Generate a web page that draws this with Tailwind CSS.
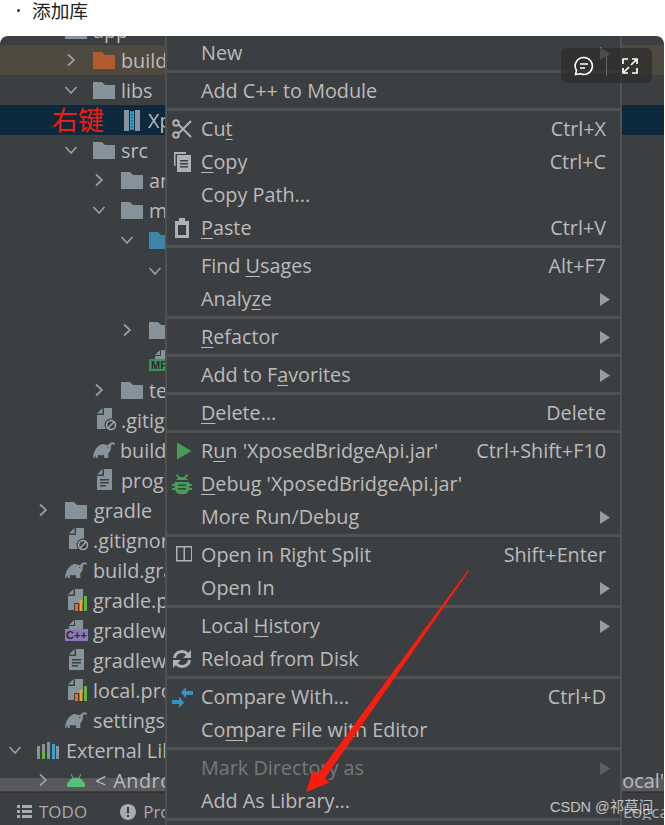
<!doctype html>
<html lang="zh">
<head>
<meta charset="utf-8">
<script src="https://cdn.jsdelivr.net/npm/@tailwindcss/browser@4"></script>
</head>
<body class="bg-white font-['Open_Sans','Noto_Sans_CJK_SC',sans-serif]">
<svg class="hidden">
  <symbol id="chev-r" viewBox="0 0 10 14"><path d="M2 1.500 8 7l-6 5.500" fill="none" stroke="#9a9c9e" stroke-width="1.700"/></symbol>
  <symbol id="chev-d" viewBox="0 0 14 10"><path d="M1.500 2 7 8l5.500-6" fill="none" stroke="#9a9c9e" stroke-width="1.700"/></symbol>
  <symbol id="folder" viewBox="0 0 22 17"><path d="M0 0h9l3 3h10v14H0z"/></symbol>
  <symbol id="file-text" viewBox="0 0 16 22"><path d="M0 5.500 5.500 0v5.500zM7 0h8v21H0V7h7z" fill="#87939a"/><path d="M3 10h9v1.500H3zM3 13h9v1.500H3zM3 16h6v1.500H3z" fill="#3c3f41"/></symbol>
  <symbol id="file-ignore" viewBox="0 0 20 24"><path d="M0 5.500 5.500 0v5.500zM7 0h8v21H0V7h7z" fill="#87939a"/><circle cx="14" cy="17" r="6.500" fill="#3c3f41"/><circle cx="14" cy="17" r="4.500" fill="none" stroke="#a2abb1" stroke-width="1.500"/><path d="m11 20 6-6" stroke="#a2abb1" stroke-width="1.500"/></symbol>
  <symbol id="elephant" viewBox="0 0 66 48"><path d="M0 48C2 28 12 8 30 6L44 10C48 8 50 2 58 1 64 0 66 4 66 8L61 8C58 4 56 8 54 12 54 24 50 30 46 34L46 48 34 48 32 38C26 40 20 40 15 38L14 48 8 48 7 40 3 48z" fill="#87939a"/><circle cx="44" cy="16" r="1.800" fill="#3c3f41"/></symbol>
  <symbol id="file-chart" viewBox="0 0 20 22"><path d="M0 5.500 5.500 0v5.500zM7 0h8v21H0V7h7z" fill="#87939a"/><path d="M6 14h14v8H6z" fill="#3c3f41"/><path d="M7 15h3v7H7z" fill="#f26522"/><path d="M11.500 11h3v11h-3z" fill="#e8a33d"/><path d="M16 7h3v15h-3z" fill="#62b543"/></symbol>
  <symbol id="tri" viewBox="0 0 10 13"><path d="M0 0l10 6.500L0 13z"/></symbol>
</svg>

<div class="flex h-[36px] items-center pb-[16px] text-[18.700px] leading-none text-[#222]">
  <span class="ml-[17px] mr-[12px] h-[3px] w-[3px] rounded-full bg-[#333]"></span>
  <span class="font-['Noto_Sans_CJK_SC',sans-serif]">添加库</span>
</div>

<main class="relative h-[789px] w-[664px] overflow-hidden rounded-t-[8px] bg-[#3c3f41] text-[19.800px] leading-none text-[#bbbbbb]">
  <div class="flex h-full flex-col">
    <div class="relative min-h-0 flex-1 overflow-hidden">
      <div class="mt-[-21px] flex flex-col [&>div>span:last-child]:translate-y-[1px]">
        <div class="flex h-[30px] items-center pl-[29px]"><span class="w-[36px]"></span><svg class="mr-[6px] h-[17px] w-[22px] fill-[#87939a]"><use href="#folder"/></svg><span>app</span></div>
        <div class="flex h-[30px] items-center bg-[#4e4a40] pl-[57px]"><span class="flex w-[36px]"><svg class="ml-[9px] h-[14px] w-[10px]"><use href="#chev-r"/></svg></span><svg class="mr-[6px] h-[17px] w-[22px] fill-[#b15b2e]"><use href="#folder"/></svg><span>build</span></div>
        <div class="flex h-[30px] items-center pl-[57px]"><span class="flex w-[36px]"><svg class="ml-[7px] h-[10px] w-[14px]"><use href="#chev-d"/></svg></span><svg class="mr-[6px] h-[17px] w-[22px] fill-[#87939a]"><use href="#folder"/></svg><span>libs</span></div>
        <div class="relative flex h-[30px] items-center bg-[#0d293e] pl-[85px]"><span class="w-[36px]"></span>
          <svg class="ml-[3px] mr-[8px] h-[21px] w-[16px]" viewBox="0 0 16 21"><path d="M0 0h16v21H0z" fill="#87939a"/><path d="M5 0h6v21H5z" fill="#0d293e"/><path d="M6 1h4v19H6z" fill="#3aa0d0"/><path d="M8 1v19" stroke="#0d293e" stroke-width="1" stroke-dasharray="1.500 1.500"/></svg>
          <span class="translate-y-[1px]">Xp</span>
          <span class="absolute left-[52px] top-[-2px] font-['Noto_Sans_CJK_SC',sans-serif] text-[26px] leading-[30px] text-[#f41c12]">右键</span>
        </div>
        <div class="flex h-[30px] items-center pl-[57px]"><span class="flex w-[36px]"><svg class="ml-[7px] h-[10px] w-[14px]"><use href="#chev-d"/></svg></span><svg class="mr-[6px] h-[17px] w-[22px] fill-[#87939a]"><use href="#folder"/></svg><span>src</span></div>
        <div class="flex h-[30px] items-center pl-[85px]"><span class="flex w-[36px]"><svg class="ml-[9px] h-[14px] w-[10px]"><use href="#chev-r"/></svg></span><svg class="mr-[6px] h-[17px] w-[22px] fill-[#87939a]"><use href="#folder"/></svg><span>an</span></div>
        <div class="flex h-[30px] items-center pl-[85px]"><span class="flex w-[36px]"><svg class="ml-[7px] h-[10px] w-[14px]"><use href="#chev-d"/></svg></span><svg class="mr-[6px] h-[17px] w-[22px] fill-[#87939a]"><use href="#folder"/></svg><span>m</span></div>
        <div class="flex h-[30px] items-center pl-[113px]"><span class="flex w-[36px]"><svg class="ml-[7px] h-[10px] w-[14px]"><use href="#chev-d"/></svg></span><svg class="mr-[6px] h-[17px] w-[22px] fill-[#3f86a6]"><use href="#folder"/></svg></div>
        <div class="flex h-[30px] items-center pl-[141px]"><span class="flex w-[36px]"><svg class="ml-[7px] h-[10px] w-[14px]"><use href="#chev-d"/></svg></span></div>
        <div class="h-[30px]"></div>
        <div class="flex h-[30px] items-center pl-[113px]"><span class="flex w-[36px]"><svg class="ml-[9px] h-[14px] w-[10px]"><use href="#chev-r"/></svg></span><svg class="mr-[6px] h-[17px] w-[22px] fill-[#87939a]"><use href="#folder"/></svg></div>
        <div class="flex h-[30px] items-center pl-[149px]">
          <div class="flex w-[23px] flex-col items-center">
            <svg class="ml-[4px] h-[10px] w-[15px]" viewBox="0 0 15 10"><path d="M0 6 5 1v5zM6 1h8v9H0V7h6z" fill="#87939a"/></svg>
            <span class="h-[12px] w-[23px] bg-[#3b8f5c] pl-[2px] font-['Liberation_Sans',sans-serif] text-[11px] font-bold leading-[12px] text-[#2b2d2e]">MF</span>
          </div>
        </div>
        <div class="flex h-[30px] items-center pl-[85px]"><span class="flex w-[36px]"><svg class="ml-[9px] h-[14px] w-[10px]"><use href="#chev-r"/></svg></span><svg class="mr-[6px] h-[17px] w-[22px] fill-[#87939a]"><use href="#folder"/></svg><span>te</span></div>
        <div class="flex h-[30px] items-center pl-[97px]"><svg class="mr-[4px] h-[24px] w-[20px]"><use href="#file-ignore"/></svg><span>.gitig</span></div>
        <div class="flex h-[30px] items-center pl-[93px]"><svg class="mr-[5px] h-[16px] w-[22px]"><use href="#elephant"/></svg><span>build</span></div>
        <div class="flex h-[30px] items-center pl-[97px]"><svg class="mr-[8px] h-[22px] w-[16px]"><use href="#file-text"/></svg><span>prog</span></div>
        <div class="flex h-[30px] items-center pl-[29px]"><span class="flex w-[36px]"><svg class="ml-[9px] h-[14px] w-[10px]"><use href="#chev-r"/></svg></span><svg class="mr-[7px] h-[17px] w-[22px] fill-[#87939a]"><use href="#folder"/></svg><span>gradle</span></div>
        <div class="flex h-[30px] items-center pl-[69px]"><svg class="mr-[4px] h-[24px] w-[20px]"><use href="#file-ignore"/></svg><span>.gitignor</span></div>
        <div class="flex h-[30px] items-center pl-[65px]"><svg class="mr-[6px] h-[16px] w-[22px]"><use href="#elephant"/></svg><span>build.gra</span></div>
        <div class="flex h-[30px] items-center pl-[68px]"><svg class="mr-[5px] h-[22px] w-[20px]"><use href="#file-chart"/></svg><span>gradle.p</span></div>
        <div class="flex h-[30px] items-center pl-[65px]">
          <div class="mr-[5px] flex w-[23px] flex-col items-center">
            <svg class="h-[10px] w-[15px]" viewBox="0 0 15 10"><path d="M0 6 5 1v5zM6 1h8v9H0V7h6z" fill="#87939a"/></svg>
            <span class="h-[12px] w-[23px] bg-[#8d78b8] text-center font-['Liberation_Sans',sans-serif] text-[11px] font-bold leading-[12px] text-[#2b2d2e]">C++</span>
          </div>
          <span>gradlew</span></div>
        <div class="flex h-[30px] items-center pl-[69px]"><svg class="mr-[8px] h-[22px] w-[16px]"><use href="#file-text"/></svg><span>gradlew</span></div>
        <div class="flex h-[30px] items-center pl-[68px]"><svg class="mr-[5px] h-[22px] w-[20px]"><use href="#file-chart"/></svg><span>local.pro</span></div>
        <div class="flex h-[30px] items-center pl-[65px]"><svg class="mr-[6px] h-[16px] w-[22px]"><use href="#elephant"/></svg><span>settings</span></div>
        <div class="flex h-[30px] items-center pl-[1px]"><span class="flex w-[36px]"><svg class="ml-[7px] h-[10px] w-[14px]"><use href="#chev-d"/></svg></span><svg class="mr-[7px] h-[17px] w-[22px]" viewBox="0 0 22 17"><path d="M0 4h3v13H0zM5 2h3v15H5z" fill="#87939a"/><path d="M5 9h3v8H5z" fill="#62b543"/><path d="M10 0h3v17h-3z" fill="#87939a"/><path d="M15 2h3v15h-3z" fill="#3aa0d0"/><path d="M19 4h3v13h-3z" fill="#87939a"/></svg><span>External Lib</span></div>
        <div class="relative flex h-[30px] items-center pl-[29px]">
          <span class="absolute inset-x-0 top-[13px] h-[13px] bg-[#59595b]"></span>
          <span class="relative flex w-[36px]"><svg class="ml-[9px] h-[14px] w-[10px]"><use href="#chev-r"/></svg></span>
          <svg class="relative ml-[2px] mr-[10px] h-[13px] w-[18px]" viewBox="0 0 18 13"><path d="M0 13a9 9 0 0 1 18 0zM4 0l2 4M14 0l-2 4" fill="#56c17d" stroke="#56c17d"/></svg>
          <span class="relative mr-[7px] translate-y-[1px]">&lt;</span>
          <span class="relative translate-y-[1px] tracking-[0.5px]">Andro</span>
          <span class="absolute left-[612px] top-[5px]">Local'</span>
        </div>
      </div>
    </div>
    <footer class="flex h-[33px] items-center border-t border-[#323232] pl-[17px] pt-[5px] text-[17px] text-[#a9abad]">
      <svg class="mr-[7px] h-[13px] w-[15px]" viewBox="0 0 15 13" fill="#a9abad"><path d="M0 0h3v3H0zM5 0h10v3H5zM0 5h3v3H0zM5 5h10v3H5zM0 10h3v3H0zM5 10h10v3H5z"/></svg>
      <span>TODO</span>
      <svg class="ml-[33px] mr-[7px] h-[16px] w-[16px]" viewBox="0 0 16 16"><circle cx="8" cy="8" r="8" fill="#a9abad"/><path d="M7 3h2v6.500H7zM7 11h2v2H7z" fill="#3c3f41"/></svg>
      <span>Pro</span>
      <span class="ml-auto w-[41px] overflow-hidden whitespace-nowrap">Logcat</span>
    </footer>
  </div>

  <nav class="absolute bottom-0 left-[165px] top-0 w-[457px] border-x-2 border-[#515151] bg-[#3c3f41] [&>div.flex]:pt-[1px]">
    <div class="flex h-[33px] items-center pl-[34px] pr-[14px]"><span>New</span><svg class="ml-auto mr-[-4px] h-[13px] w-[10px] fill-[#9a9b9c]"><use href="#tri"/></svg></div>
    <div class="my-[1px] h-[3px] bg-[#515151]"></div>
    <div class="flex h-[33px] items-center pl-[34px] pr-[14px]"><span>Add C++ to Module</span></div>
    <div class="my-[1px] h-[3px] bg-[#515151]"></div>
    <div class="flex h-[33px] items-center pl-[5px] pr-[14px]">
      <svg class="mr-[9px] h-[20px] w-[20px]" viewBox="0 0 20 20" fill="none" stroke="#afb1b3" stroke-width="2"><circle cx="4" cy="4" r="2.800"/><circle cx="4" cy="16" r="2.800"/><path d="M6.500 5.500 19 18M6.500 14.500 19 2"/></svg>
      <span>Cu<u class="underline-offset-[3px]">t</u></span><span class="ml-auto">Ctrl+X</span></div>
    <div class="flex h-[33px] items-center pl-[5px] pr-[14px]">
      <svg class="mr-[9px] h-[20px] w-[20px]" viewBox="0 0 20 20"><path d="M2 0h12v2H3.500v12H2z" fill="#afb1b3"/><path d="M5 3h14v17H5z" fill="#afb1b3"/><path d="M8 8h8v1.500H8zM8 11h8v1.500H8zM8 14h8v1.500H8z" fill="#3c3f41"/></svg>
      <span><u class="underline-offset-[3px]">C</u>opy</span><span class="ml-auto">Ctrl+C</span></div>
    <div class="flex h-[33px] items-center pl-[34px] pr-[14px]"><span>Copy Path...</span></div>
    <div class="flex h-[33px] items-center pl-[5px] pr-[14px]">
      <svg class="mr-[9px] h-[20px] w-[20px]" viewBox="0 0 20 20"><path d="M3 3h4V0h6v3h4v17H3zM6 7v10h8V7z" fill="#afb1b3"/></svg>
      <span><u class="underline-offset-[3px]">P</u>aste</span><span class="ml-auto">Ctrl+V</span></div>
    <div class="my-[1px] h-[3px] bg-[#515151]"></div>
    <div class="flex h-[33px] items-center pl-[34px] pr-[14px]"><span>Find <u class="underline-offset-[3px]">U</u>sages</span><span class="ml-auto">Alt+F7</span></div>
    <div class="flex h-[33px] items-center pl-[34px] pr-[14px]"><span>Analy<u class="underline-offset-[3px]">z</u>e</span><svg class="ml-auto mr-[-4px] h-[13px] w-[10px] fill-[#9a9b9c]"><use href="#tri"/></svg></div>
    <div class="my-[1px] h-[3px] bg-[#515151]"></div>
    <div class="flex h-[33px] items-center pl-[34px] pr-[14px]"><span><u class="underline-offset-[3px]">R</u>efactor</span><svg class="ml-auto mr-[-4px] h-[13px] w-[10px] fill-[#9a9b9c]"><use href="#tri"/></svg></div>
    <div class="my-[1px] h-[3px] bg-[#515151]"></div>
    <div class="flex h-[33px] items-center pl-[34px] pr-[14px]"><span>Add to F<u class="underline-offset-[3px]">a</u>vorites</span><svg class="ml-auto mr-[-4px] h-[13px] w-[10px] fill-[#9a9b9c]"><use href="#tri"/></svg></div>
    <div class="my-[1px] h-[3px] bg-[#515151]"></div>
    <div class="flex h-[33px] items-center pl-[34px] pr-[14px]"><span><u class="underline-offset-[3px]">D</u>elete...</span><span class="ml-auto">Delete</span></div>
    <div class="my-[1px] h-[3px] bg-[#515151]"></div>
    <div class="flex h-[33px] items-center pl-[5px] pr-[14px]">
      <svg class="mr-[9px] h-[20px] w-[20px]" viewBox="0 0 20 20"><path d="M5 1.500 19.500 10 5 18.500z" fill="#499c54"/></svg>
      <span>R<u class="underline-offset-[3px]">u</u>n 'XposedBridgeApi.jar'</span><span class="ml-auto">Ctrl+Shift+F10</span></div>
    <div class="flex h-[33px] items-center pl-[5px] pr-[14px]">
      <svg class="mr-[9px] h-[20px] w-[20px]" viewBox="0 0 20 20" fill="#499c54"><path d="M5 0l3 3h4l3-3 1.300 1.300L13.800 4c1 .6 1.700 1.300 2 2H4.200c.3-.7 1-1.400 2-2L3.700 1.300z"/><path d="M3 8h14c.3.500.5 1 .5 2H20v2h-2.500v2H20v2h-3a7.500 7.500 0 0 1-14 0H0v-2h2.500v-2H0v-2h2.500c0-1 .2-1.500.5-2z"/><path d="M6 10.500h8V12H6zM6 14h8v1.500H6z" fill="#3c3f41"/></svg>
      <span><u class="underline-offset-[3px]">D</u>ebug 'XposedBridgeApi.jar'</span></div>
    <div class="flex h-[33px] items-center pl-[34px] pr-[14px]"><span>More Run/Debug</span><svg class="ml-auto mr-[-4px] h-[13px] w-[10px] fill-[#9a9b9c]"><use href="#tri"/></svg></div>
    <div class="my-[1px] h-[3px] bg-[#515151]"></div>
    <div class="flex h-[33px] items-center pl-[5px] pr-[14px]">
      <svg class="mr-[9px] h-[20px] w-[20px]" viewBox="0 0 20 20" fill="none" stroke="#afb1b3" stroke-width="1.500"><path d="M4.750 1.750h15v14h-15zM12.250 1.750v14"/></svg>
      <span>Open in Right Split</span><span class="ml-auto">Shift+Enter</span></div>
    <div class="flex h-[33px] items-center pl-[34px] pr-[14px]"><span>Open In</span><svg class="ml-auto mr-[-4px] h-[13px] w-[10px] fill-[#9a9b9c]"><use href="#tri"/></svg></div>
    <div class="my-[1px] h-[3px] bg-[#515151]"></div>
    <div class="flex h-[33px] items-center pl-[34px] pr-[14px]"><span>Local <u class="underline-offset-[3px]">H</u>istory</span><svg class="ml-auto mr-[-4px] h-[13px] w-[10px] fill-[#9a9b9c]"><use href="#tri"/></svg></div>
    <div class="flex h-[33px] items-center pl-[5px] pr-[14px]">
      <svg class="mr-[9px] h-[20px] w-[20px]" viewBox="0 0 20 20" fill="none" stroke="#afb1b3" stroke-width="3"><path d="M2.500 9a7.500 7.500 0 0 1 13-4"/><path d="M17.500 11a7.500 7.500 0 0 1-13 4"/><path d="M19 1v8h-8zM1 19v-8h8z" fill="#afb1b3" stroke="none"/></svg>
      <span>Reload from Disk</span></div>
    <div class="my-[1px] h-[3px] bg-[#515151]"></div>
    <div class="flex h-[33px] items-center pl-[5px] pr-[14px]">
      <svg class="mr-[8px] h-[21px] w-[21px]" viewBox="0 0 21 21" fill="#3592c4"><path d="M9 5.500 14 0v4h7v4h-7v3.500zM12 15.500 7 21v-4H0v-4h7V9.500z"/></svg>
      <span>Compare With...</span><span class="ml-auto">Ctrl+D</span></div>
    <div class="flex h-[33px] items-center pl-[34px] pr-[14px]"><span>Co<u class="underline-offset-[3px]">m</u>pare File with Editor</span></div>
    <div class="my-[1px] h-[3px] bg-[#515151]"></div>
    <div class="flex h-[33px] items-center pl-[34px] pr-[14px] text-[#77797a]"><span>Mark Directory as</span><svg class="ml-auto mr-[-4px] h-[13px] w-[10px] fill-[#5e6060]"><use href="#tri"/></svg></div>
    <div class="flex h-[33px] items-center pl-[34px] pr-[14px]"><span>Add As Library...</span></div>
    <div class="my-[1px] h-[3px] bg-[#515151]"></div>
  </nav>

  <div class="absolute left-[561px] top-[12px] flex h-[35px] w-[91px] items-center rounded-[6px] bg-[#2b2b2b]/70">
    <span class="flex flex-1 justify-center"><svg class="h-[20px] w-[20px]" viewBox="0 0 20 20" fill="none" stroke="#fff" stroke-width="1.600"><path d="M10 1.500a8.500 8.500 0 1 1-3.500 16.300L1.500 18.500l1-4A8.500 8.500 0 0 1 10 1.500z"/><path d="M6 8h8M6 12h5"/></svg></span>
    <span class="h-[21px] w-px bg-white/25"></span>
    <span class="flex flex-1 justify-center"><svg class="h-[16px] w-[16px]" viewBox="0 0 16 16" fill="none" stroke="#fff" stroke-width="1.700"><path d="M6 1H1v5M10 1h5v5M6 15H1v-5M10 15h5v-5M9 7l5-5M7 9l-5 5"/></svg></span>
  </div>

  <svg class="pointer-events-none absolute left-[300px] top-[528px] h-[240px] w-[175px]" viewBox="0 0 175 240"><path d="M168 6 169 7 25 214 29 219 6 228 13 206 18 210z" fill="#fb1c10"/></svg>

  <span class="absolute left-[550px] top-[761px] font-['Liberation_Sans','Noto_Sans_CJK_SC',sans-serif] text-[14.500px] leading-[20px] text-white/70">CSDN @祁莫问</span>
</main>
</body>
</html>
